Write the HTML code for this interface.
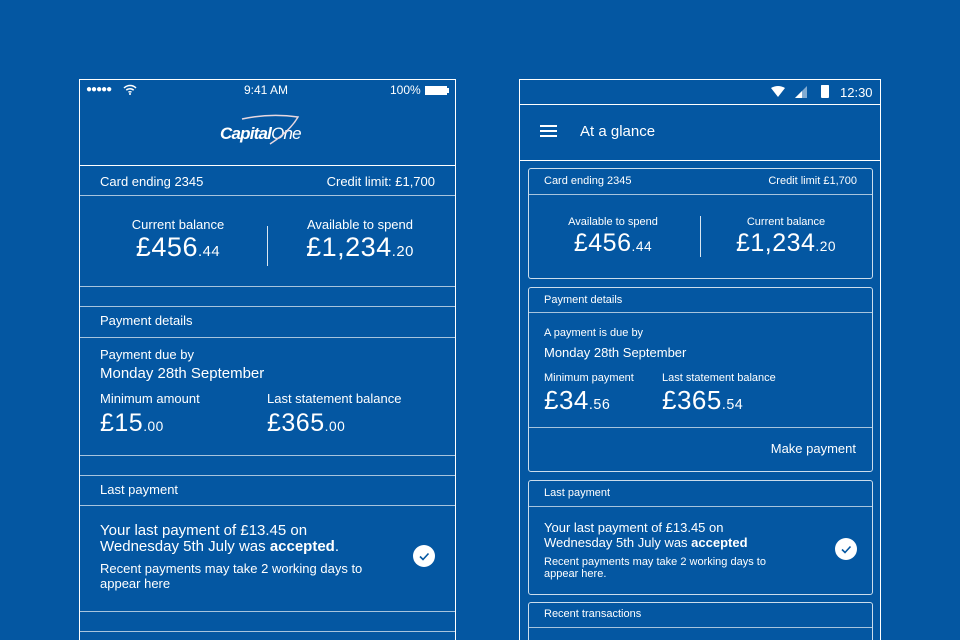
<!DOCTYPE html>
<html><head><meta charset="utf-8"><style>
*{margin:0;padding:0;box-sizing:border-box}
html,body{width:960px;height:640px;overflow:hidden}
body{background:#0457a2;font-family:"Liberation Sans",sans-serif;color:#fff;position:relative}
.a{position:absolute;white-space:nowrap;line-height:1}
.hl{position:absolute;height:1px;background:rgba(255,255,255,.65)}
.vl{position:absolute;width:1px;background:rgba(255,255,255,.85)}
.ph{position:absolute;border:1px solid #fff;border-bottom:none}
.card{position:absolute;border:1.5px solid rgba(255,255,255,.8);border-radius:3px}
.c{transform:translateX(-50%)}
.r{transform:translateX(-100%)}
.big{font-weight:300;letter-spacing:.5px}
.big small{font-size:55%}
</style></head><body>
<!-- LEFT PHONE -->
<div class="ph" style="left:79px;top:79px;width:377px;height:561px"></div>
<div class="a" style="left:86px;top:85px;font-size:10px;letter-spacing:-1px">●●●●●</div>
<svg class="a" style="left:123px;top:84px" width="14" height="11" viewBox="0 0 14 11"><path d="M1 4a8.5 8.5 0 0 1 12 0M3.3 6.2a5.3 5.3 0 0 1 7.4 0M5.5 8.3a2.2 2.2 0 0 1 3 0" stroke="#fff" stroke-width="1.5" fill="none"/><circle cx="7" cy="10" r="1" fill="#fff"/></svg>
<div class="a c" style="left:266px;top:84px;font-size:12px">9:41 AM</div>
<div class="a" style="left:390px;top:84px;font-size:12px">100%</div>
<div class="a" style="left:425px;top:86px;width:22px;height:9px;background:#fff;border:1px solid #fff"></div>
<div class="a" style="left:447px;top:88px;width:2px;height:5px;background:#fff"></div>
<div class="a" style="left:220px;top:125px;font-size:17px;font-weight:bold;font-style:italic;letter-spacing:-.8px">Capital<span style="font-weight:normal">One</span></div>
<svg class="a" style="left:240px;top:113px" width="62" height="32" viewBox="0 0 62 32"><path d="M2 6Q30 0 58 4Q50 18 30 31" stroke="#e8d8e0" stroke-width="1.5" fill="none"/></svg>
<div class="hl" style="left:80px;top:165px;width:375px;background:#fff"></div>
<div class="a" style="left:100px;top:175px;font-size:13px">Card ending 2345</div>
<div class="a r" style="left:435px;top:175px;font-size:13px">Credit limit: £1,700</div>
<div class="hl" style="left:80px;top:195px;width:375px"></div>
<div class="a c" style="left:178px;top:218px;font-size:13px">Current balance</div>
<div class="a c big" style="left:178px;top:234px;font-size:27px">£456<small>.44</small></div>
<div class="vl" style="left:267px;top:226px;height:40px"></div>
<div class="a c" style="left:360px;top:218px;font-size:13px">Available to spend</div>
<div class="a c big" style="left:360px;top:234px;font-size:27px">£1,234<small>.20</small></div>
<div class="hl" style="left:80px;top:286px;width:375px"></div>
<div class="hl" style="left:80px;top:306px;width:375px"></div>
<div class="a" style="left:100px;top:314px;font-size:13px">Payment details</div>
<div class="hl" style="left:80px;top:337px;width:375px"></div>
<div class="a" style="left:100px;top:348px;font-size:13px">Payment due by</div>
<div class="a" style="left:100px;top:366px;font-size:15px">Monday 28th September</div>
<div class="a" style="left:100px;top:392px;font-size:13px">Minimum amount</div>
<div class="a big" style="left:100px;top:411px;font-size:25px">£15<small>.00</small></div>
<div class="a" style="left:267px;top:392px;font-size:13px">Last statement balance</div>
<div class="a big" style="left:267px;top:411px;font-size:25px">£365<small>.00</small></div>
<div class="hl" style="left:80px;top:455px;width:375px"></div>
<div class="hl" style="left:80px;top:475px;width:375px"></div>
<div class="a" style="left:100px;top:483px;font-size:13px">Last payment</div>
<div class="hl" style="left:80px;top:505px;width:375px"></div>
<div class="a" style="left:100px;top:523px;font-size:15px">Your last payment of £13.45 on</div>
<div class="a" style="left:100px;top:539px;font-size:15px">Wednesday 5th July was <b>accepted</b>.</div>
<div class="a" style="left:100px;top:562px;font-size:13px">Recent payments may take 2 working days to</div>
<div class="a" style="left:100px;top:577px;font-size:13px">appear here</div>
<svg class="a" style="left:413px;top:545px" width="22" height="22" viewBox="0 0 22 22"><circle cx="11" cy="11" r="11" fill="#fff"/><path d="M7 11.5l3 3 5.5-6" stroke="#0457a2" stroke-width="1.6" fill="none"/></svg>
<div class="hl" style="left:80px;top:611px;width:375px"></div>
<div class="hl" style="left:80px;top:631px;width:375px"></div>

<!-- RIGHT PHONE -->
<div class="ph" style="left:519px;top:79px;width:362px;height:561px"></div>
<svg class="a" style="left:771px;top:86px" width="14" height="11" viewBox="0 0 14 11"><path d="M0 2Q7 -2 14 2L7 11Z" fill="#fff"/></svg>
<svg class="a" style="left:795px;top:86px" width="12" height="12" viewBox="0 0 12 12"><path d="M12 0V12H0Z" fill="rgba(255,255,255,.5)"/><path d="M7 5V12H0Z" fill="#fff"/></svg>
<div class="a" style="left:821px;top:85px;width:8px;height:13px;background:#fff;border-radius:1px"></div>
<div class="a" style="left:821px;top:85px;width:8px;height:6px;background:rgba(255,255,255,.5)"></div>
<div class="a" style="left:840px;top:86px;font-size:13px">12:30</div>
<div class="hl" style="left:520px;top:104px;width:360px;background:#fff"></div>
<div class="a" style="left:540px;top:125px;width:17px;height:2px;background:#fff"></div>
<div class="a" style="left:540px;top:130px;width:17px;height:2px;background:#fff"></div>
<div class="a" style="left:540px;top:135px;width:17px;height:2px;background:#fff"></div>
<div class="a" style="left:580px;top:124px;font-size:15px">At a glance</div>
<div class="hl" style="left:520px;top:160px;width:360px;background:#fff"></div>

<div class="card" style="left:528px;top:168px;width:345px;height:111px"></div>
<div class="hl" style="left:529px;top:194px;width:343px"></div>
<div class="a" style="left:544px;top:176px;font-size:11px">Card ending 2345</div>
<div class="a r" style="left:857px;top:176px;font-size:11px">Credit limit £1,700</div>
<div class="a c" style="left:613px;top:217px;font-size:11px">Available to spend</div>
<div class="a c big" style="left:613px;top:231px;font-size:25px">£456<small>.44</small></div>
<div class="vl" style="left:700px;top:216px;height:41px"></div>
<div class="a c" style="left:786px;top:217px;font-size:11px">Current balance</div>
<div class="a c big" style="left:786px;top:231px;font-size:25px">£1,234<small>.20</small></div>

<div class="card" style="left:528px;top:287px;width:345px;height:185px"></div>
<div class="hl" style="left:529px;top:312px;width:343px"></div>
<div class="a" style="left:544px;top:295px;font-size:11px">Payment details</div>
<div class="a" style="left:544px;top:328px;font-size:11px">A payment is due by</div>
<div class="a" style="left:544px;top:346px;font-size:13px">Monday 28th September</div>
<div class="a" style="left:544px;top:373px;font-size:11px">Minimum payment</div>
<div class="a big" style="left:544px;top:387px;font-size:26px">£34<small>.56</small></div>
<div class="a" style="left:662px;top:373px;font-size:11px">Last statement balance</div>
<div class="a big" style="left:662px;top:387px;font-size:26px">£365<small>.54</small></div>
<div class="hl" style="left:529px;top:427px;width:343px"></div>
<div class="a r" style="left:856px;top:442px;font-size:13px">Make payment</div>

<div class="card" style="left:528px;top:480px;width:345px;height:115px"></div>
<div class="hl" style="left:529px;top:506px;width:343px"></div>
<div class="a" style="left:544px;top:488px;font-size:11px">Last payment</div>
<div class="a" style="left:544px;top:521px;font-size:13px">Your last payment of £13.45 on</div>
<div class="a" style="left:544px;top:536px;font-size:13px">Wednesday 5th July was <b>accepted</b></div>
<div class="a" style="left:544px;top:557px;font-size:11px">Recent payments may take 2 working days to</div>
<div class="a" style="left:544px;top:569px;font-size:11px">appear here.</div>
<svg class="a" style="left:835px;top:538px" width="22" height="22" viewBox="0 0 22 22"><circle cx="11" cy="11" r="11" fill="#fff"/><path d="M7 11.5l3 3 5.5-6" stroke="#0457a2" stroke-width="1.6" fill="none"/></svg>

<div class="card" style="left:528px;top:602px;width:345px;height:50px"></div>
<div class="hl" style="left:529px;top:627px;width:343px"></div>
<div class="a" style="left:544px;top:609px;font-size:11px">Recent transactions</div>
</body></html>
